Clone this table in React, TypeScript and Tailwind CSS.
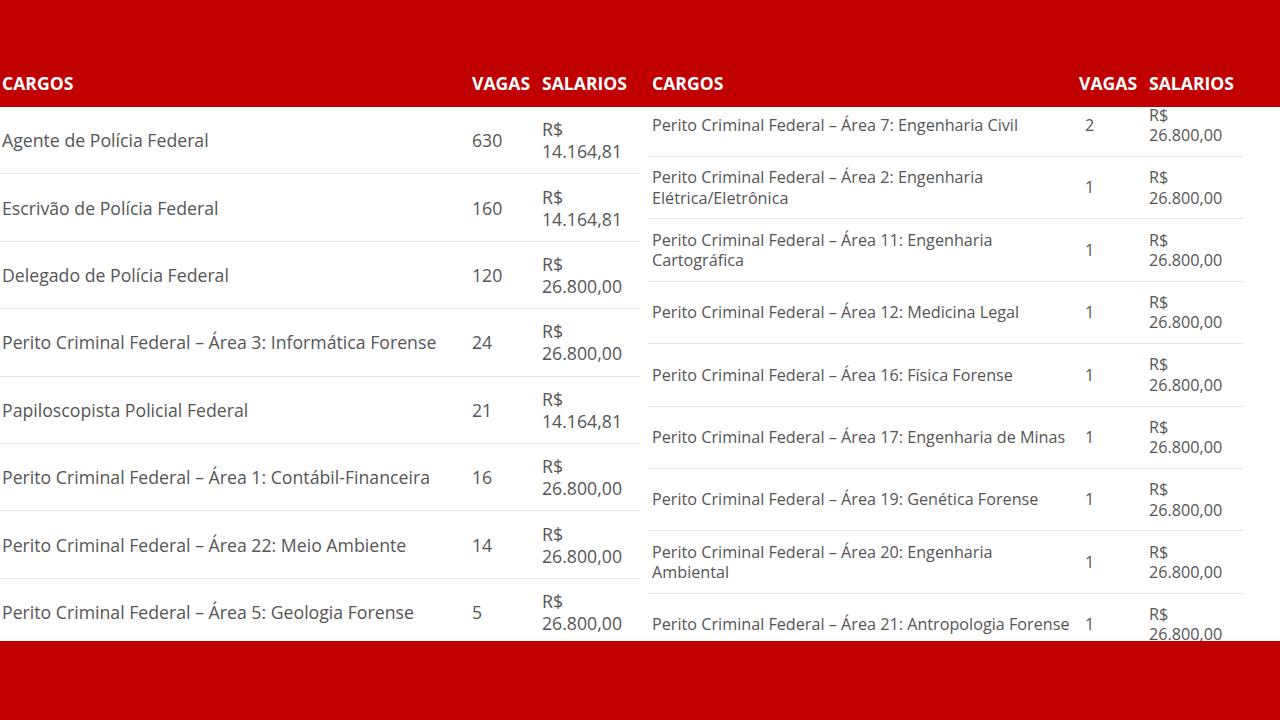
import React from 'react';

type Row = { cargo: string[]; vagas: string; salario: string };

const left: Row[] = [
  { cargo: ['Agente de Polícia Federal'], vagas: '630', salario: '14.164,81' },
  { cargo: ['Escrivão de Polícia Federal'], vagas: '160', salario: '14.164,81' },
  { cargo: ['Delegado de Polícia Federal'], vagas: '120', salario: '26.800,00' },
  { cargo: ['Perito Criminal Federal – Área 3: Informática Forense'], vagas: '24', salario: '26.800,00' },
  { cargo: ['Papiloscopista Policial Federal'], vagas: '21', salario: '14.164,81' },
  { cargo: ['Perito Criminal Federal – Área 1: Contábil-Financeira'], vagas: '16', salario: '26.800,00' },
  { cargo: ['Perito Criminal Federal – Área 22: Meio Ambiente'], vagas: '14', salario: '26.800,00' },
  { cargo: ['Perito Criminal Federal – Área 5: Geologia Forense'], vagas: '5', salario: '26.800,00' },
];

const right: Row[] = [
  { cargo: ['Perito Criminal Federal – Área 7: Engenharia Civil'], vagas: '2', salario: '26.800,00' },
  { cargo: ['Perito Criminal Federal – Área 2: Engenharia', 'Elétrica/Eletrônica'], vagas: '1', salario: '26.800,00' },
  { cargo: ['Perito Criminal Federal – Área 11: Engenharia', 'Cartográfica'], vagas: '1', salario: '26.800,00' },
  { cargo: ['Perito Criminal Federal – Área 12: Medicina Legal'], vagas: '1', salario: '26.800,00' },
  { cargo: ['Perito Criminal Federal – Área 16: Física Forense'], vagas: '1', salario: '26.800,00' },
  { cargo: ['Perito Criminal Federal – Área 17: Engenharia de Minas'], vagas: '1', salario: '26.800,00' },
  { cargo: ['Perito Criminal Federal – Área 19: Genética Forense'], vagas: '1', salario: '26.800,00' },
  { cargo: ['Perito Criminal Federal – Área 20: Engenharia', 'Ambiental'], vagas: '1', salario: '26.800,00' },
  { cargo: ['Perito Criminal Federal – Área 21: Antropologia Forense'], vagas: '1', salario: '26.800,00' },
];

export default function App() {
  return (
    <div className="w-[1280px] h-[720px] bg-[#c00000] overflow-hidden flex flex-col text-[#555555]" style={{ fontFamily: '"Open Sans", sans-serif' }}>
      <div className="h-[60px] shrink-0" />

      {/* header row */}
      <div className="h-[47px] shrink-0 flex items-center text-white font-bold text-[17.6px]">
        <div className="w-[640px] flex">
          <div className="w-[470px] pl-[2px]">CARGOS</div>
          <div className="w-[70px] pl-[2px]">VAGAS</div>
          <div className="flex-1 pl-[2px]">SALARIOS</div>
        </div>
        <div className="w-[8px]" />
        <div className="w-[595px] flex">
          <div className="w-[429px] pl-[4px]">CARGOS</div>
          <div className="w-[70px] pl-[2px]">VAGAS</div>
          <div className="flex-1 pl-[2px]">SALARIOS</div>
        </div>
      </div>

      {/* body */}
      <div className="h-[534px] shrink-0 bg-white flex overflow-hidden">
        <div className="w-[640px] shrink-0 flex flex-col">
          {left.map((r, i) => (
            <div key={i} className="h-[67.4px] shrink-0 flex items-center border-b border-[#e4e4e4] text-[17.7px] leading-[22px]">
              <div className="w-[470px] pl-[2px] whitespace-nowrap">{r.cargo[0]}</div>
              <div className="w-[70px] pl-[2px]">{r.vagas}</div>
              <div className="flex-1 pl-[2px]">
                <div>R$</div>
                <div>{r.salario}</div>
              </div>
            </div>
          ))}
        </div>
        <div className="w-[8px] shrink-0" />
        <div className="w-[595px] shrink-0 flex flex-col mt-[-12.4px]">
          {right.map((r, i) => (
            <div key={i} className="h-[62.4px] shrink-0 flex items-center border-b border-[#e4e4e4] text-[16.2px] leading-[20.5px]">
              <div className="w-[429px] pl-[4px] whitespace-nowrap">
                {r.cargo.map((l, j) => (
                  <div key={j}>{l}</div>
                ))}
              </div>
              <div className="w-[70px] pl-[8px]">{r.vagas}</div>
              <div className="flex-1 pl-[2px]">
                <div>R$</div>
                <div>{r.salario}</div>
              </div>
            </div>
          ))}
        </div>
      </div>
    </div>
  );
}
